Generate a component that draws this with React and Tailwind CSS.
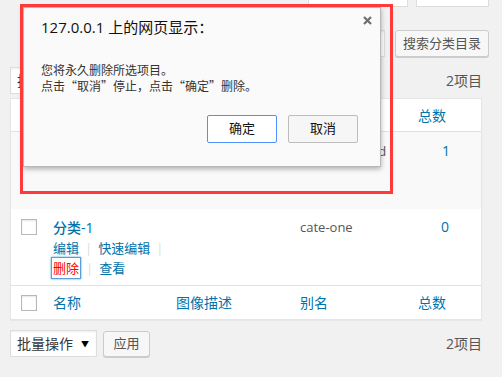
import React from 'react';

const FONT = { fontFamily: '"Open Sans", "Noto Sans CJK SC", sans-serif' };
const CJK = { fontFamily: '"Noto Sans CJK SC", "Open Sans", sans-serif' };

function Checkbox() {
  return (
    <span className="block w-[16px] h-[16px] border border-[#b4b9be] bg-white shadow-[inset_0_1px_2px_rgba(0,0,0,0.1)]" />
  );
}

function BulkActions() {
  return (
    <div className="flex items-center gap-[6px]">
      <div className="flex items-center justify-between w-[87px] h-[27px] border border-[#ddd] bg-white pl-[6px] pr-[7px] text-[14px] text-[#32373c] shadow-[inset_0_1px_2px_rgba(0,0,0,0.07)]">
        <span>批量操作</span>
        <span className="text-[8px] text-black">▼</span>
      </div>
      <button className="w-[47px] h-[26px] rounded-[3px] border border-[#ccc] bg-[#f7f7f7] text-[13px] text-[#555] shadow-[0_1px_0_#ccc]">
        应用
      </button>
    </div>
  );
}

const COLS = 'grid grid-cols-[42px_123px_124px_118px_1fr]';

export default function App() {
  return (
    <div style={FONT} className="relative w-[502px] h-[377px] overflow-hidden bg-[#f1f1f1]">
      {/* screen meta tabs */}
      <div className="flex justify-end gap-[8px] pr-[13px]">
        <div className="w-[100px] h-[7px] bg-white border-x border-b border-[#ddd]" />
        <div className="w-[73px] h-[7px] bg-white border-x border-b border-[#ddd]" />
      </div>

      {/* search */}
      <div className="mt-[23px] flex justify-end gap-[10px] pr-[13px]">
        <div className="w-[160px] h-[27px] bg-white border border-[#ddd] shadow-[inset_0_1px_2px_rgba(0,0,0,0.07)]" />
        <button className="w-[94px] h-[27px] rounded-[3px] border border-[#ccc] bg-[#f7f7f7] text-[13px] text-[#555] shadow-[0_1px_0_#ccc]">
          搜索分类目录
        </button>
      </div>

      {/* top nav */}
      <div className="mt-[10px] flex items-center justify-between pl-[10px] pr-[20px]">
        <BulkActions />
        <span className="text-[14px] text-[#555]">2项目</span>
      </div>

      {/* table */}
      <div className="mt-[4px] ml-[10px] mr-[20px] border border-[#e5e5e5] bg-white shadow-[0_1px_1px_rgba(0,0,0,0.04)]">
        <div className={`${COLS} h-[33px] items-center border-b border-[#e1e1e1] text-[14px] text-[#0073aa]`}>
          <div className="pl-[10px]"><Checkbox /></div>
          <div>名称</div>
          <div>图像描述</div>
          <div>别名</div>
          <div>总数</div>
        </div>

        <div className={`${COLS} h-[77px] bg-[#f9f9f9] leading-[20px]`}>
          <div className="pl-[10px] pt-[10px]"><Checkbox /></div>
          <div className="pt-[9px] text-[14px] font-medium text-[#0073aa]">未分类</div>
          <div />
          <div className="pt-[9px] text-[13px] text-[#555]">uncategorized</div>
          <div className="pt-[9px] pl-[24px] text-[14px] text-[#0073aa]">1</div>
        </div>

        <div className={`${COLS} h-[76px] bg-white leading-[20px]`}>
          <div className="pl-[10px] pt-[10px]"><Checkbox /></div>
          <div className="pt-[9px]">
            <div className="text-[14px] font-medium text-[#0073aa]">分类-1</div>
            <div className="flex items-center text-[13px] text-[#0073aa]">
              <span>编辑</span>
              <span className="mx-[6px] text-[#ddd]">|</span>
              <span>快速编辑</span>
              <span className="ml-[6px] text-[#ddd]">|</span>
            </div>
            <div className="flex items-center text-[13px]">
              <span className="-ml-[1px] px-[1px] text-[#ff0000] shadow-[0_0_0_1px_#5b9dd9,0_0_2px_1px_rgba(30,140,190,0.8)]">删除</span>
              <span className="mx-[6px] text-[#ddd]">|</span>
              <span className="text-[#0073aa]">查看</span>
            </div>
          </div>
          <div />
          <div className="pt-[8px] text-[13px] text-[#555]">cate-one</div>
          <div className="pt-[8px] pl-[23px] text-[14px] text-[#0073aa]">0</div>
        </div>

        <div className={`${COLS} h-[34px] items-center border-t border-[#e1e1e1] text-[14px] text-[#0073aa]`}>
          <div className="pl-[10px]"><Checkbox /></div>
          <div>名称</div>
          <div>图像描述</div>
          <div>别名</div>
          <div>总数</div>
        </div>
      </div>

      {/* bottom nav */}
      <div className="mt-[10px] flex items-center justify-between pl-[10px] pr-[20px]">
        <BulkActions />
        <span className="text-[14px] text-[#555]">2项目</span>
      </div>

      {/* confirm dialog */}
      <div className="absolute left-[23px] top-[7px] w-[358px] h-[160px] flex flex-col bg-[#fafafa] border border-[#b9b9b9] shadow-[0_2px_5px_rgba(0,0,0,0.3)]">
        <div className="flex justify-between pl-[17px] pr-[8px] pt-[7px]">
          <span className="mt-[2px] text-[15px] leading-[20px] text-[#111]">127.0.0.1 上的网页显示：</span>
          <svg width="9" height="9" viewBox="0 0 9 9" className="mt-[1px]">
            <path d="M1 1L8 8M8 1L1 8" stroke="#6e6e6e" strokeWidth="2.2" />
          </svg>
        </div>
        <div style={CJK} className="mt-[25px] pl-[17px] text-[12px] leading-[16px] text-[#333]">
          <div>您将永久删除所选项目。</div>
          <div>点击“取消”停止，点击“确定”删除。</div>
        </div>
        <div className="mt-[21px] flex justify-end gap-[11px] pr-[22px]">
          <button className="w-[70px] h-[28px] rounded-[2px] border border-[#4d90fe] bg-white text-[13px] text-[#111]">确定</button>
          <button className="w-[70px] h-[28px] rounded-[2px] border border-[#bdbdbd] bg-[#f6f6f6] text-[13px] text-[#111]">取消</button>
        </div>
      </div>

      {/* annotation frame */}
      <div className="absolute left-[20px] top-[4px] w-[373px] h-[190px] border-[3px] border-[#fe3a3a]" />
    </div>
  );
}
